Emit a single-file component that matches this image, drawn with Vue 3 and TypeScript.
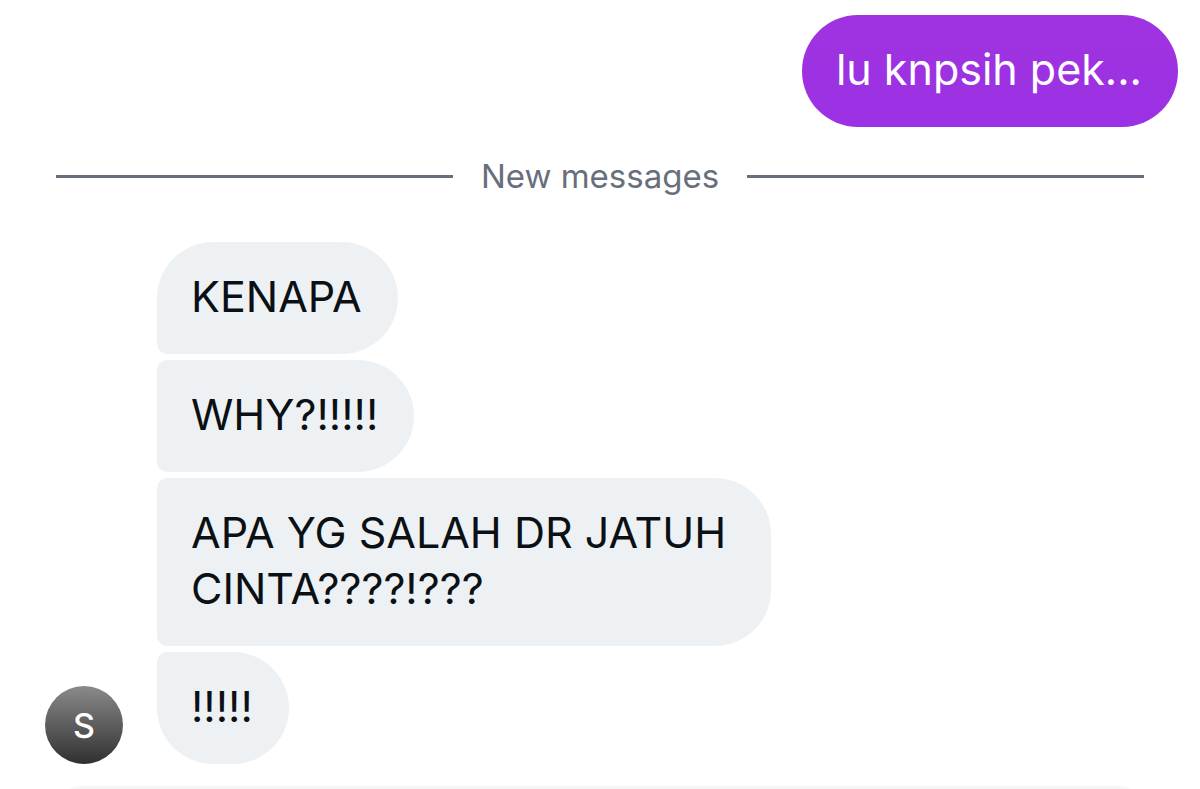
<script setup lang="ts">
const incoming: string[] = ['KENAPA', 'WHY?!!!!!', 'APA YG SALAH DR JATUH CINTA????!???', '!!!!!']
</script>

<template>
  <main class="chat">
    <div class="row-out">
      <p class="bubble out">lu knpsih pek...</p>
    </div>
    <div class="divider"><span>New messages</span></div>
    <section class="group">
      <div class="avatar">S</div>
      <div class="stack">
        <p v-for="(text, i) in incoming" :key="i" class="bubble in">{{ text }}</p>
      </div>
    </section>
    <div class="composer"></div>
  </main>
</template>

<style>
body {
  margin: 0;
  background: #fff;
}
</style>

<style scoped>
.chat {
  box-sizing: border-box;
  height: 100vh;
  overflow: hidden;
  padding-top: 15px;
  font-family: Inter, "Liberation Sans", sans-serif;
  color: #0b1015;
}
.row-out {
  display: flex;
  justify-content: flex-end;
  padding-right: 22px;
}
.bubble {
  margin: 0;
  padding: 26px 36px 30px 34px;
  border-radius: 56px;
  font-size: 43px;
  line-height: 56px;
}
.out {
  background: linear-gradient(#a033e0, #9b31e4);
  color: #fff;
}
.divider {
  display: flex;
  align-items: center;
  gap: 28px;
  margin: 29px 56px 45px;
  font-size: 33px;
  line-height: 41px;
  color: #686f7c;
}
.divider::before,
.divider::after {
  content: "";
  flex: 1;
  height: 3px;
  background: #686f7c;
}
.group {
  display: flex;
  align-items: flex-end;
  gap: 34px;
  padding-left: 45px;
}
.avatar {
  display: flex;
  align-items: center;
  justify-content: center;
  width: 78px;
  height: 78px;
  border-radius: 50%;
  background: linear-gradient(#8a8a8a, #303030);
  color: #fff;
  font-size: 34px;
  font-weight: 500;
}
.stack {
  display: flex;
  flex-direction: column;
  align-items: flex-start;
  gap: 6px;
  max-width: 614px;
}
.in {
  background: #eef1f4;
  border-radius: 10px 56px 56px 10px;
}
.in:first-child {
  border-top-left-radius: 56px;
}
.in:last-child {
  border-bottom-left-radius: 56px;
}
.composer {
  height: 60px;
  margin: 22px 50px 0;
  border: 3px solid #f6f6f7;
  border-radius: 56px;
}
</style>
